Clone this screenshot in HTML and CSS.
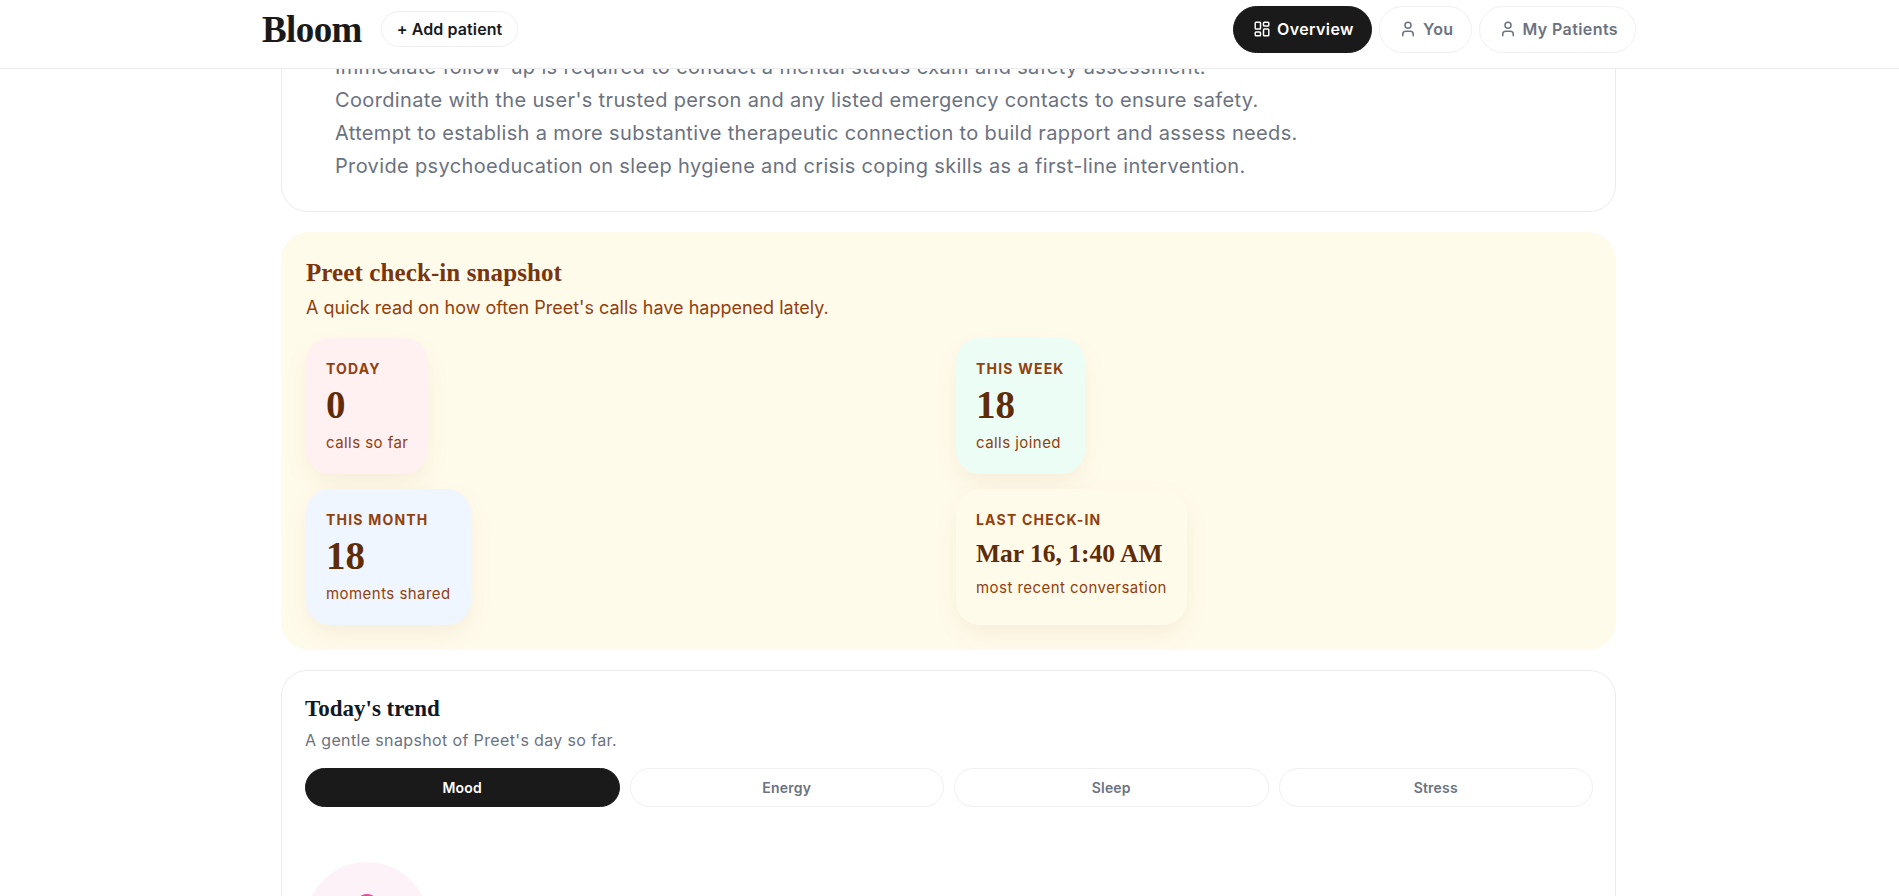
FILE: index.html
```html
<!DOCTYPE html>
<html lang="en">
<head>
    <meta charset="UTF-8">
    <meta name="viewport" content="width=device-width, initial-scale=1.0">
    <title>Bloom</title>
    <link rel="stylesheet" href="styles.css">
</head>
<body>
    <header class="topbar">
        <div class="topbar-left">
            <div class="logo">Bloom</div>
            <button class="add-btn">+ Add patient</button>
        </div>
        <nav class="nav">
            <a class="nav-item active">
                <svg class="nav-icon" viewBox="0 0 24 24" fill="none" stroke="currentColor" stroke-width="2" stroke-linecap="round" stroke-linejoin="round"><rect x="3" y="3" width="7" height="9" rx="1"/><rect x="14" y="3" width="7" height="5" rx="1"/><rect x="14" y="12" width="7" height="9" rx="1"/><rect x="3" y="16" width="7" height="5" rx="1"/></svg>
                Overview
            </a>
            <a class="nav-item">
                <svg class="nav-icon" viewBox="0 0 24 24" fill="none" stroke="currentColor" stroke-width="2" stroke-linecap="round" stroke-linejoin="round"><path d="M19 21v-2a4 4 0 0 0-4-4H9a4 4 0 0 0-4 4v2"/><circle cx="12" cy="7" r="4"/></svg>
                You
            </a>
            <a class="nav-item">
                <svg class="nav-icon" viewBox="0 0 24 24" fill="none" stroke="currentColor" stroke-width="2" stroke-linecap="round" stroke-linejoin="round"><path d="M19 21v-2a4 4 0 0 0-4-4H9a4 4 0 0 0-4 4v2"/><circle cx="12" cy="7" r="4"/></svg>
                My Patients
            </a>
        </nav>
    </header>

    <main class="content">
        <section class="card plan-card">
            <p>Immediate follow-up is required to conduct a mental status exam and safety assessment.</p>
            <p>Coordinate with the user's trusted person and any listed emergency contacts to ensure safety.</p>
            <p>Attempt to establish a more substantive therapeutic connection to build rapport and assess needs.</p>
            <p>Provide psychoeducation on sleep hygiene and crisis coping skills as a first-line intervention.</p>
        </section>

        <section class="snapshot">
            <h2>Preet check-in snapshot</h2>
            <p class="snapshot-sub">A quick read on how often Preet's calls have happened lately.</p>
            <div class="stats">
                <div class="stat stat-rose">
                    <div class="stat-label">TODAY</div>
                    <div class="stat-value">0</div>
                    <div class="stat-note">calls so far</div>
                </div>
                <div class="stat stat-mint">
                    <div class="stat-label">THIS WEEK</div>
                    <div class="stat-value">18</div>
                    <div class="stat-note">calls joined</div>
                </div>
                <div class="stat stat-blue">
                    <div class="stat-label">THIS MONTH</div>
                    <div class="stat-value">18</div>
                    <div class="stat-note">moments shared</div>
                </div>
                <div class="stat stat-cream">
                    <div class="stat-label">LAST CHECK-IN</div>
                    <div class="stat-value stat-date">Mar 16, 1:40 AM</div>
                    <div class="stat-note">most recent conversation</div>
                </div>
            </div>
        </section>

        <section class="card trend-card">
            <h2>Today's trend</h2>
            <p class="trend-sub">A gentle snapshot of Preet's day so far.</p>
            <div class="tabs">
                <button class="tab active">Mood</button>
                <button class="tab">Energy</button>
                <button class="tab">Sleep</button>
                <button class="tab">Stress</button>
            </div>
            <div class="mood-circle"><span class="mood-dot"></span></div>
        </section>
    </main>
</body>
</html>
```

FILE: styles.css
```css
* {
    box-sizing: border-box;
    margin: 0;
    padding: 0;
}

html, body {
    height: 100%;
    overflow: hidden;
}

body {
    font-family: 'Inter', 'Open Sans', sans-serif;
    background-color: #fff;
    color: #1a1a1a;
    display: flex;
    flex-direction: column;
}

h2, .logo, .stat-value {
    font-family: 'Liberation Serif', serif;
    font-weight: 700;
}

.topbar {
    flex: none;
    height: 69px;
    padding: 0 263px 10px 262px;
    display: flex;
    justify-content: space-between;
    align-items: center;
    background-color: #fff;
    border-bottom: 1px solid #ececee;
    position: relative;
    z-index: 2;
}

.topbar-left {
    display: flex;
    align-items: center;
    gap: 19px;
}

.logo {
    font-size: 37px;
    letter-spacing: -0.6px;
    color: #1a1a1a;
}

.add-btn {
    height: 36px;
    padding: 0 15px;
    border: 1px solid #f0f0f2;
    border-radius: 18px;
    background-color: #fff;
    font-family: inherit;
    font-size: 16px;
    font-weight: 600;
    letter-spacing: 0.1px;
    color: #1a1a1a;
}

.nav {
    display: flex;
    gap: 7px;
}

.nav-item {
    height: 47px;
    padding: 0 17px 0 19px;
    display: flex;
    align-items: center;
    gap: 6px;
    border: 1px solid #f0f0f2;
    border-radius: 24px;
    font-size: 16px;
    font-weight: 600;
    letter-spacing: 0.4px;
    color: #6b7280;
}

.nav-item.active {
    background-color: #1a1a1a;
    border-color: #1a1a1a;
    color: #fff;
}

.nav-icon {
    width: 18px;
    height: 18px;
}

.content {
    flex: 1;
    min-height: 0;
    overflow: hidden;
    width: 1335px;
    margin-left: 281px;
}

.card {
    background-color: #fff;
    border: 1px solid #ececee;
    border-radius: 26px;
}

.plan-card {
    margin-top: -63px;
    padding: 44px 52px 28px 53px;
    font-size: 20px;
    line-height: 33px;
    letter-spacing: 0.35px;
    color: #6b7280;
}

.snapshot {
    margin-top: 20px;
    height: 418px;
    padding: 25px 25px 24px;
    background-color: #fffbeb;
    border-radius: 28px;
}

.snapshot h2 {
    font-size: 25px;
    line-height: 32px;
    letter-spacing: 0.1px;
    color: #78350f;
}

.snapshot-sub {
    margin-top: 6px;
    font-size: 18px;
    line-height: 26px;
    color: #92400e;
}

.stats {
    margin-top: 17px;
    display: grid;
    grid-template-columns: 1fr 1fr;
    gap: 15px;
    justify-items: start;
}

.stat {
    height: 136px;
    padding: 21px 20px 20px;
    border-radius: 24px;
    box-shadow: 0 10px 25px rgba(146, 64, 14, 0.07);
}

.stat-rose { background-color: #fff1f2; }
.stat-mint { background-color: #ecfdf5; }
.stat-blue { background-color: #eff6ff; }
.stat-cream { background-color: #fffbeb; }

.stat-label {
    font-size: 14px;
    line-height: 20px;
    font-weight: 700;
    letter-spacing: 1.2px;
    color: #92400e;
}

.stat-value {
    margin-top: 3px;
    font-size: 39px;
    line-height: 46px;
    color: #5f2c08;
}

.stat-date {
    margin-top: 4px;
    font-size: 25.5px;
    line-height: 39px;
}

.stat-note {
    margin-top: 4px;
    font-size: 15px;
    line-height: 22px;
    letter-spacing: 0.45px;
    color: #92400e;
}

.trend-card {
    margin-top: 20px;
    padding: 22px 22px 22px 23px;
    height: 400px;
}

.trend-card h2 {
    font-size: 23px;
    line-height: 32px;
    color: #111827;
}

.trend-sub {
    margin-top: 3px;
    font-size: 16px;
    line-height: 24px;
    letter-spacing: 0.36px;
    color: #6b7280;
}

.tabs {
    margin-top: 16px;
    display: grid;
    grid-template-columns: repeat(4, 1fr);
    gap: 10px;
}

.tab {
    height: 39px;
    padding-bottom: 1px;
    border: 1px solid #f0f0f2;
    border-radius: 20px;
    background-color: #fff;
    font-family: inherit;
    font-size: 14px;
    font-weight: 600;
    letter-spacing: 0.2px;
    color: #6b7280;
}

.tab.active {
    background-color: #1a1a1a;
    border-color: #1a1a1a;
    color: #fff;
}

.mood-circle {
    margin-top: 55px;
    width: 124px;
    height: 124px;
    border-radius: 50%;
    background-color: #fdf2f8;
    display: flex;
    justify-content: center;
    padding-top: 32px;
}

.mood-dot {
    width: 24px;
    height: 24px;
    border-radius: 50%;
    background-color: #ec4899;
}
```
